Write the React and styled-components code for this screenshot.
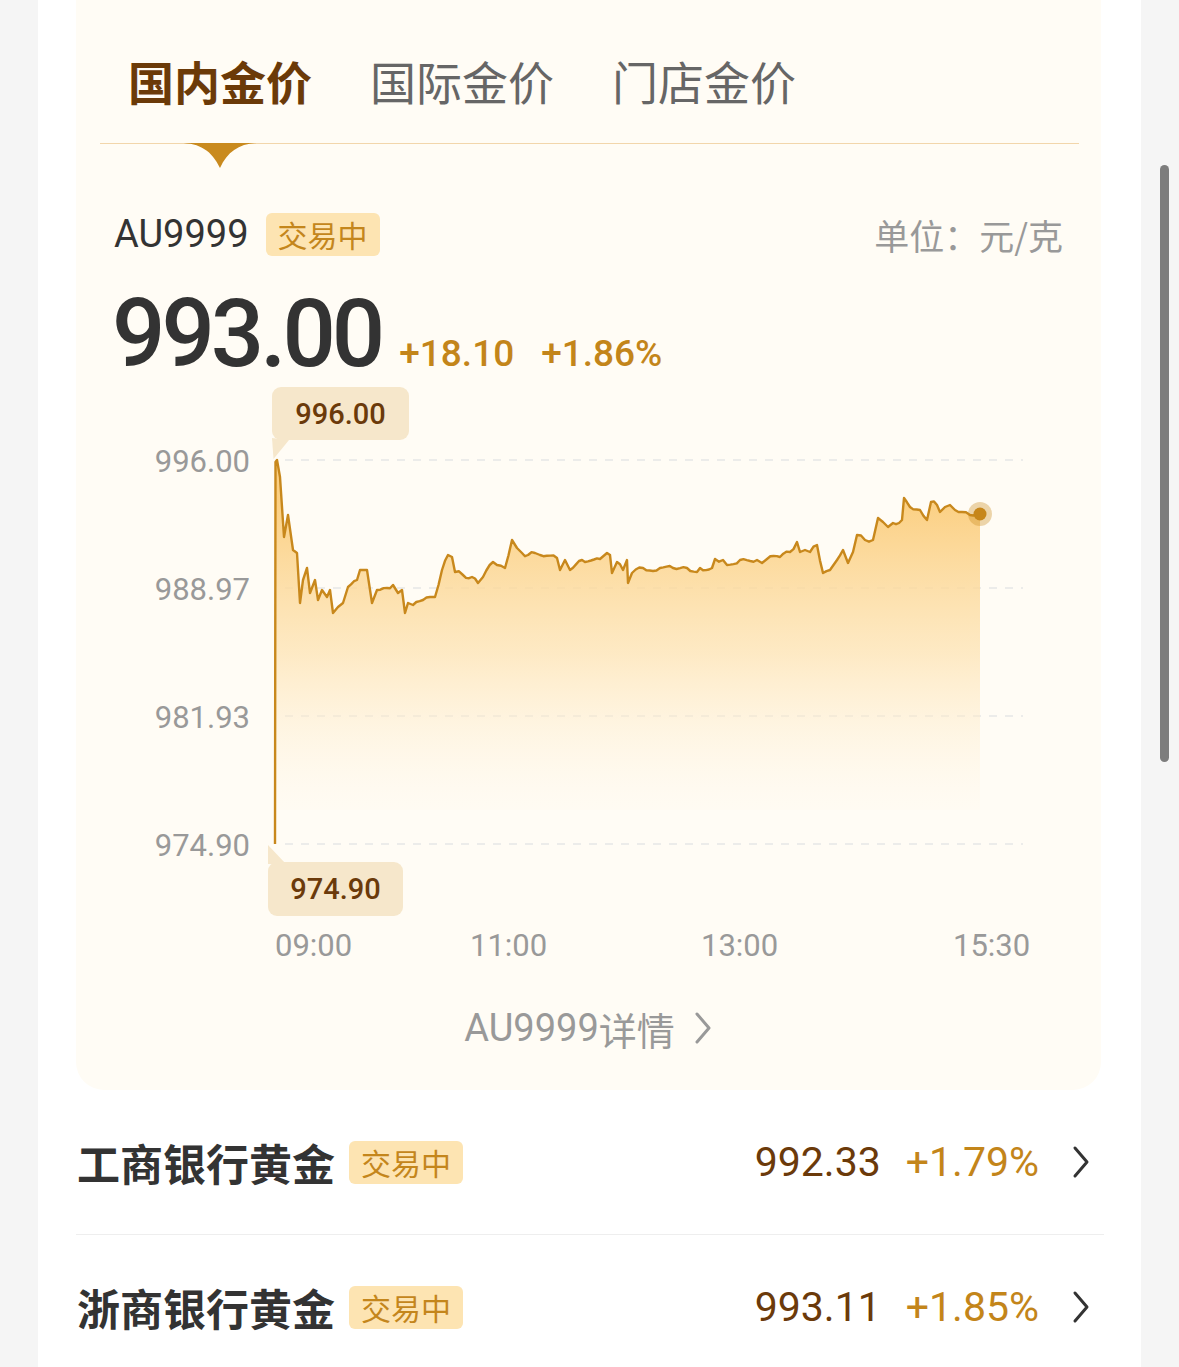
import React from "react";
import styled, { createGlobalStyle } from "styled-components";

const GlobalStyle = createGlobalStyle`
  html, body {
    margin: 0;
    background: #f5f5f5;
    font-family: "Noto Sans CJK SC", "Noto Sans", sans-serif;
  }
`;

const NUM = `"Roboto", "Noto Sans CJK SC", sans-serif`;

const Panel = styled.div`
  width: 1103px;
  min-height: 1367px;
  margin: 0 auto;
  background: #fff;
  overflow: hidden;
`;

const Card = styled.section`
  margin: 0 40px 0 38px;
  padding-bottom: 37px;
  background: #fffcf5;
  border-radius: 0 0 28px 28px;
`;

const TabBar = styled.nav`
  display: flex;
  gap: 58px;
  margin: 0 22px 0 24px;
  padding: 47px 0 30px 28px;
  border-bottom: 1px solid #f2d6ab;
`;

const Tab = styled.div`
  position: relative;
  font-size: 46px;
  line-height: 66px;
  font-weight: ${(p) => (p.$active ? 700 : 400)};
  color: ${(p) => (p.$active ? "#6b3a08" : "#666")};
`;

const Pointer = styled.svg`
  position: absolute;
  left: 50%;
  top: 96px;
  transform: translateX(-50%);
`;

const InfoRow = styled.div`
  display: flex;
  align-items: center;
  height: 44px;
  margin-top: 68px;
  padding: 0 38px;
`;

const Code = styled.span`
  font-family: ${NUM};
  font-size: 38px;
  color: #333;
`;

const Badge = styled.span`
  display: inline-block;
  height: 43px;
  margin-left: ${(p) => p.$gap}px;
  padding: 0 12px;
  border-radius: 6px;
  background: #fde4b2;
  color: #c4861c;
  font-size: 30px;
  line-height: 43px;
`;

const Unit = styled.span`
  margin-left: auto;
  font-size: 35px;
  color: #999;
`;

const PriceRow = styled.div`
  display: flex;
  align-items: baseline;
  height: 100px;
  margin-top: 28px;
  padding: 0 38px 0 36px;
`;

const BigPrice = styled.span`
  font-family: ${NUM};
  font-size: 94px;
  line-height: 100px;
  font-weight: 500;
  letter-spacing: -4px;
  color: #333;
`;

const Change = styled.span`
  margin-left: ${(p) => p.$gap}px;
  font-family: ${NUM};
  font-size: 37px;
  font-weight: 500;
  color: #c3851a;
`;

const ChartBox = styled.div`
  position: relative;
  width: 1025px;
  height: 586px;
  svg {
    display: block;
  }
`;

const Bubble = styled.div`
  position: absolute;
  left: ${(p) => p.$left}px;
  top: ${(p) => p.$top}px;
  width: ${(p) => p.$w}px;
  height: ${(p) => p.$h}px;
  display: flex;
  align-items: center;
  justify-content: center;
  border-radius: 9px;
  background: #f6e7cb;
  color: #6b3a0a;
  font-family: ${NUM};
  font-size: 29px;
  font-weight: 500;
`;

const DetailLink = styled.div`
  display: flex;
  align-items: center;
  justify-content: center;
  margin-top: 33px;
  height: 50px;
  font-size: 38px;
  color: #999;
  span {
    font-family: ${NUM};
  }
  svg {
    margin-left: 18px;
  }
`;

const List = styled.div`
  margin: 0 37px 0 38px;
`;

const Row = styled.div`
  display: flex;
  align-items: center;
  height: 144px;
  padding: 0 14px 0 1px;
  & + & {
    border-top: 1px solid #eeeeee;
  }
`;

const BankName = styled.span`
  font-size: 43px;
  font-weight: 700;
  color: #333;
`;

const RowPrice = styled.span`
  margin-left: auto;
  font-family: ${NUM};
  font-size: 41px;
  color: #6b3a0a;
`;

const RowPct = styled.span`
  margin: 0 33px 0 25px;
  font-family: ${NUM};
  font-size: 41px;
  color: #c3851a;
`;

const ScrollThumb = styled.div`
  position: fixed;
  left: 1160px;
  top: 165px;
  width: 9px;
  height: 597px;
  border-radius: 5px;
  background: #7d7d7d;
`;

const raw = [
  [277,460],[280,477],[284,537],[288,515],[293,550],[297,553],[300,603],[303,580],[307,568],[310,593],
  [315,580],[318,600],[322,590],[327,597],[330,590],[333,613],[338,607],[343,603],[348,587],[357,580],
  [360,570],[363,570],[367,570],[372,603],[377,590],[387,588],[393,585],[398,593],[402,590],[405,613],
  [408,603],[413,605],[423,600],[430,597],[435,597],[442,570],[448,555],[452,557],[455,572],[463,575],
  [472,577],[478,583],[483,577],[493,562],[497,565],[505,568],[512,540],[517,548],[522,553],[528,555],
  [535,553],[540,555],[557,558],[560,570],[565,560],[570,570],[582,560],[600,559],[607,553],[610,555],
  [612,573],[617,562],[623,570],[627,560],[628,583],[632,573],[643,568],[653,571],[660,568],[673,568],
  [687,568],[697,572],[700,568],[712,568],[715,559],[723,560],[727,565],[740,560],[757,560],[762,563],
  [767,559],[780,557],[790,552],[797,542],[800,552],[805,550],[810,552],[817,545],[823,573],[830,570],
  [837,560],[843,550],[848,563],[853,552],[857,535],[865,540],[873,540],[878,518],[883,522],[888,527],
  [893,523],[902,520],[904,498],[910,507],[920,510],[927,520],[931,502],[937,505],[940,512],[945,507],
  [950,505],[955,510],[962,512],[970,515],[980,514],
];

// fill the gaps with a little deterministic wiggle so the line looks like ticks
const points = [];
raw.forEach(([x, y], i) => {
  if (i > 0) {
    const [px, py] = raw[i - 1];
    const steps = Math.floor((x - px) / 3);
    for (let s = 1; s < steps; s++) {
      const t = s / steps;
      const jit = Math.sin((px + s) * 12.9898) * 2.2;
      points.push([px + (x - px) * t, py + (y - py) * t + jit]);
    }
  }
  points.push([x, y]);
});

const linePath =
  "M275,844 L275.5,462 " + points.map(([x, y]) => `L${x.toFixed(1)},${y.toFixed(1)}`).join(" ");
const areaPath =
  "M275,810 L275.5,462 " +
  points.map(([x, y]) => `L${x.toFixed(1)},${y.toFixed(1)}`).join(" ") +
  " L980,810 Z";

const grid = [
  { y: 460, label: "996.00" },
  { y: 588, label: "988.97" },
  { y: 716, label: "981.93" },
  { y: 844, label: "974.90" },
];

const times = [
  { x: 275, label: "09:00" },
  { x: 470, label: "11:00" },
  { x: 701, label: "13:00" },
  { x: 953, label: "15:30" },
];

const banks = [
  { name: "工商银行黄金", price: "992.33", pct: "+1.79%" },
  { name: "浙商银行黄金", price: "993.11", pct: "+1.85%" },
];

const Chevron = ({ color, w = 18, h = 34 }) => (
  <svg width={w} height={h} viewBox="0 0 18 34">
    <polyline points="3,3 15,17 3,31" fill="none" stroke={color} strokeWidth="3" strokeLinecap="round" strokeLinejoin="round" />
  </svg>
);

const Chart = () => (
  <ChartBox>
    <svg width="1025" height="586" viewBox="76 384 1025 586">
      <defs>
        <linearGradient id="goldFill" gradientUnits="userSpaceOnUse" x1="0" y1="500" x2="0" y2="810">
          <stop offset="0" stopColor="#fbcd7c" stopOpacity="0.95" />
          <stop offset="0.5" stopColor="#fde2b0" stopOpacity="0.7" />
          <stop offset="1" stopColor="#fff6e6" stopOpacity="0.15" />
        </linearGradient>
      </defs>
      {grid.map((g) => (
        <g key={g.label}>
          <line x1="285" x2="1023" y1={g.y} y2={g.y} stroke="#e6e6e6" strokeWidth="1.5" strokeDasharray="8 8" />
          <text x="250" y={g.y + 12} textAnchor="end" fontFamily="Roboto, sans-serif" fontSize="31" fill="#999">
            {g.label}
          </text>
        </g>
      ))}
      <path d={areaPath} fill="url(#goldFill)" />
      <path d={linePath} fill="none" stroke="#c8881c" strokeWidth="2.4" strokeLinejoin="round" />
      <polygon points="272,438 289,440 273.5,459" fill="#f6e7cb" />
      <polygon points="268,845 268,864 286,864" fill="#f6e7cb" />
      <circle cx="980" cy="514" r="12" fill="#c98a1e" opacity="0.35" />
      <circle cx="980" cy="514" r="6.5" fill="#c6861a" />
      {times.map((t) => (
        <text key={t.label} x={t.x} y="956" fontFamily="Roboto, sans-serif" fontSize="31" fill="#999">
          {t.label}
        </text>
      ))}
    </svg>
    <Bubble $left={196} $top={3} $w={137} $h={53}>996.00</Bubble>
    <Bubble $left={192} $top={478} $w={135} $h={54}>974.90</Bubble>
  </ChartBox>
);

export default function App() {
  return (
    <>
      <GlobalStyle />
      <Panel>
        <Card>
          <TabBar>
            <Tab $active>
              国内金价
              <Pointer width="80" height="25" viewBox="0 0 80 25">
                <path d="M0 0 C20 0 32 8 40 25 C48 8 60 0 80 0 Z" fill="#c98a1e" />
              </Pointer>
            </Tab>
            <Tab>国际金价</Tab>
            <Tab>门店金价</Tab>
          </TabBar>

          <InfoRow>
            <Code>AU9999</Code>
            <Badge $gap={17}>交易中</Badge>
            <Unit>单位：元/克</Unit>
          </InfoRow>

          <PriceRow>
            <BigPrice>993.00</BigPrice>
            <Change $gap={18}>+18.10</Change>
            <Change $gap={27}>+1.86%</Change>
          </PriceRow>

          <Chart />

          <DetailLink>
            <span>AU9999</span>详情
            <Chevron color="#999" w={20} />
          </DetailLink>
        </Card>

        <List>
          {banks.map((b) => (
            <Row key={b.name}>
              <BankName>{b.name}</BankName>
              <Badge $gap={14}>交易中</Badge>
              <RowPrice>{b.price}</RowPrice>
              <RowPct>{b.pct}</RowPct>
              <Chevron color="#333" />
            </Row>
          ))}
        </List>
      </Panel>
      <ScrollThumb />
    </>
  );
}
